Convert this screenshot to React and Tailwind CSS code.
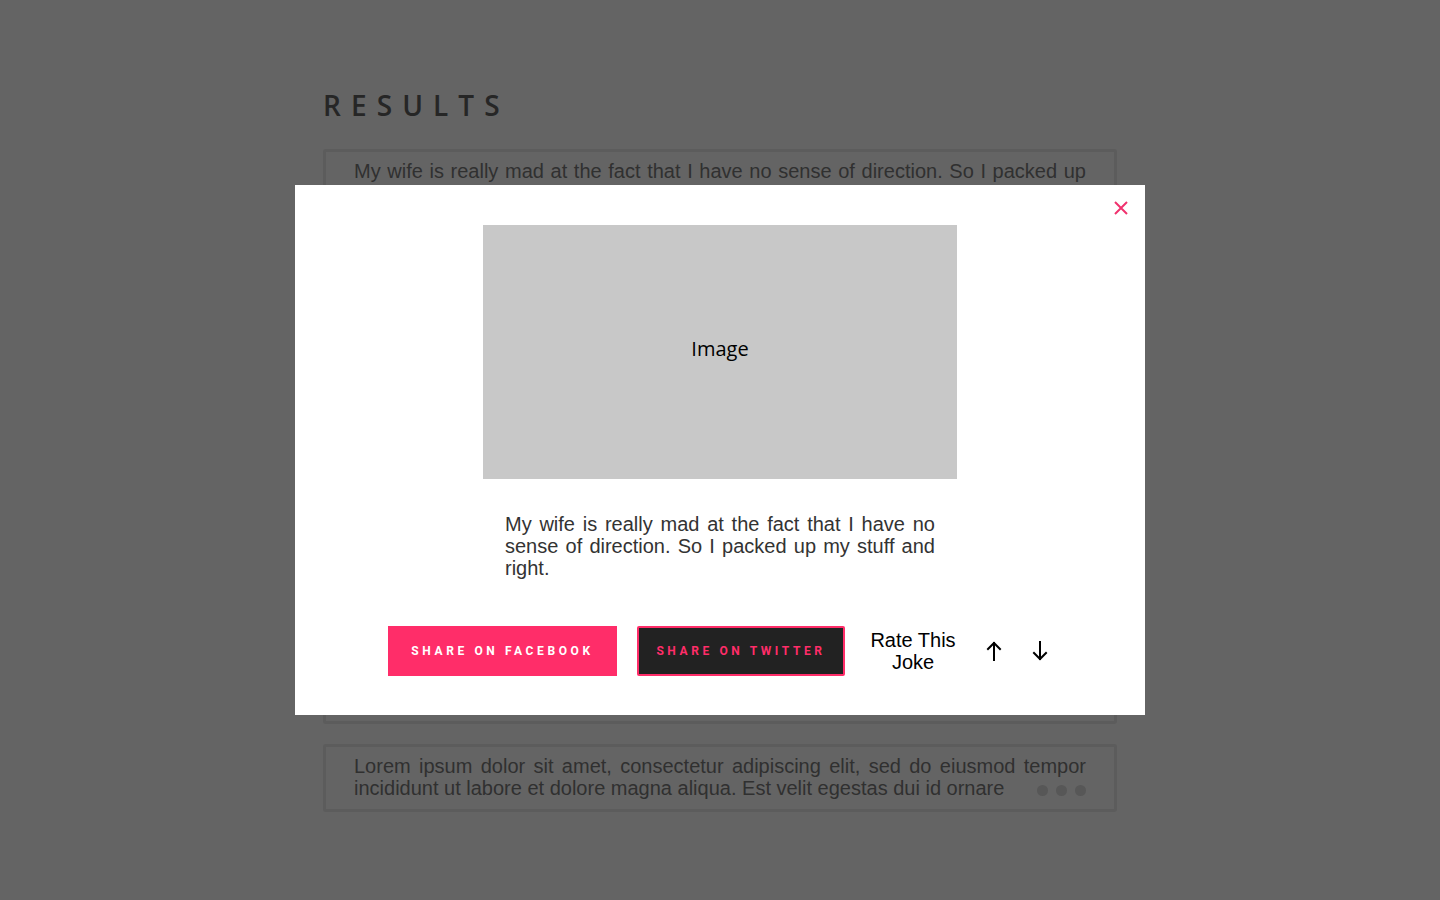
const SANS = "font-['Liberation_Sans',Arial,sans-serif]";

const jokes = [
  {
    id: 1,
    text: "My wife is really mad at the fact that I have no sense of direction. So I packed up my stuff and right.",
  },
  { id: 2, text: "", tall: true },
  {
    id: 3,
    text: "Lorem ipsum dolor sit amet, consectetur adipiscing elit, sed do eiusmod tempor incididunt ut labore et dolore magna aliqua. Est velit egestas dui id ornare",
    dots: true,
  },
];

function JokeCard({ joke }) {
  return (
    <div
      className={`relative rounded-[3px] border-[3px] border-[#5c5c5c] px-[28px] pt-[8px] pb-[10px] ${
        joke.tall ? "h-[487px]" : ""
      }`}
    >
      <p className={`${SANS} text-justify text-[20px] leading-[22px] text-[#303030]`}>{joke.text}</p>
      {joke.dots && (
        <div className="absolute right-[28px] bottom-[13px] flex gap-[8px]">
          <span className="h-[11px] w-[11px] rounded-full bg-[#575757]" />
          <span className="h-[11px] w-[11px] rounded-full bg-[#575757]" />
          <span className="h-[11px] w-[11px] rounded-full bg-[#575757]" />
        </div>
      )}
    </div>
  );
}

function Arrow({ down = false }) {
  return (
    <svg width="16" height="20" viewBox="0 0 16 20" className={down ? "rotate-180" : ""}>
      <path d="M8 19V2M2 8l6-6 6 6" fill="none" stroke="#000" strokeWidth="2" strokeLinecap="square" />
    </svg>
  );
}

function Modal() {
  return (
    <div className="fixed inset-0 flex items-start justify-center pt-[185px]">
      <div className="relative flex h-[530px] w-[850px] flex-col items-center bg-white pt-[40px]">
        <button className="absolute top-[11px] right-[12px] p-1">
          <svg width="16" height="16" viewBox="0 0 16 16">
            <path d="M2 2l12 12M14 2L2 14" stroke="#f0326e" strokeWidth="2" />
          </svg>
        </button>
        <div className="flex h-[254px] w-[474px] items-center justify-center bg-[#c8c8c8] pb-[6px]">
          <span className="font-['Open_Sans',sans-serif] text-[20px] font-medium text-black">Image</span>
        </div>
        <p className={`${SANS} mt-[34px] w-[430px] text-justify text-[20px] leading-[22px] text-[#333]`}>
          {jokes[0].text}
        </p>
        <div className="mt-[47px] flex items-center pr-[4px]">
          <button className="h-[50px] w-[229px] bg-[#ff2d69] font-['Roboto',sans-serif] text-[12px] font-bold tracking-[0.3em] text-white">
            SHARE ON FACEBOOK
          </button>
          <button className="ml-[20px] h-[50px] w-[208px] rounded-[2px] border-2 border-[#ff2d69] bg-[#222] font-['Roboto',sans-serif] text-[12px] font-bold tracking-[0.3em] text-[#ff2d69]">
            SHARE ON TWITTER
          </button>
          <div className={`${SANS} ml-[25px] w-[86px] text-center text-[20px] leading-[22px] text-black`}>
            Rate This Joke
          </div>
          <div className="ml-[30px] flex items-center gap-[30px]">
            <Arrow />
            <Arrow down />
          </div>
        </div>
      </div>
    </div>
  );
}

export default function App() {
  return (
    <div className="min-h-[900px] w-full bg-[#646464]">
      <div className="mx-auto w-[794px] pt-[89px]">
        <h1 className="font-['Open_Sans',sans-serif] text-[28px] leading-[32px] font-semibold tracking-[0.36em] text-[#262626]">
          RESULTS
        </h1>
        <div className="mt-[28px] flex flex-col gap-[20px]">
          {jokes.map((j) => (
            <JokeCard key={j.id} joke={j} />
          ))}
        </div>
      </div>
      <Modal />
    </div>
  );
}
